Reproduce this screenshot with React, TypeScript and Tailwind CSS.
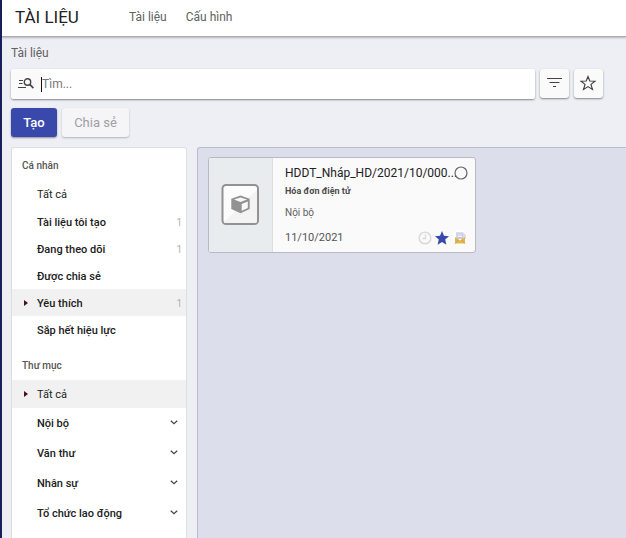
import React from "react";

type Item = { label: string; count?: number; active?: boolean; plain?: boolean };

const personal: Item[] = [
  { label: "Tài liệu tôi tạo", count: 1 },
  { label: "Đang theo dõi", count: 1 },
  { label: "Được chia sẻ" },
  { label: "Yêu thích", count: 1, active: true },
  { label: "Sắp hết hiệu lực" },
];

const folders = ["Nội bộ", "Văn thư", "Nhân sự", "Tổ chức lao động"];

function Caret() {
  return (
    <svg className="h-[6px] w-[4px]" viewBox="0 0 4 6" aria-hidden="true">
      <path d="M0 0L4 3L0 6Z" fill="#4a1020" />
    </svg>
  );
}

function PersonalRow({ label, count, active, plain }: Item) {
  return (
    <li>
      <button
        type="button"
        className={
          "flex w-full items-center pr-1 text-left text-[11px] text-[#212121] " +
          (plain ? "h-[29px] " : "h-[27px] font-medium ") +
          (active ? "bg-[#f1f1f1]" : "")
        }
      >
        <span className="flex w-[25px] shrink-0 pl-3">{active && <Caret />}</span>
        <span className="flex-1 pt-[3px]">{label}</span>
        {count !== undefined && (
          <span className="pt-px text-[10px] font-normal text-[#b0b0b0]">{count}</span>
        )}
      </button>
    </li>
  );
}

function FolderRow({ label }: { label: string }) {
  return (
    <li>
      <button
        type="button"
        className="flex h-[30px] w-full items-center pr-2 text-left text-[11px] font-medium text-[#212121]"
      >
        <span className="flex-1 pt-[3px] pl-[25px]">{label}</span>
        <svg className="h-[8px] w-[8px]" viewBox="0 0 8 8" fill="none" stroke="#444" aria-hidden="true">
          <path d="M0.8 1.7L4 4.7L7.2 1.7" strokeWidth="1.2" />
        </svg>
      </button>
    </li>
  );
}

function Sidebar() {
  return (
    <nav className="w-[176px] shrink-0 rounded-t-[3px] border border-b-0 border-[#dedee2] bg-white">
      <h2 className="pt-[11px] pl-[10px] text-[10px] leading-[14px] font-medium text-[#555]">Cá nhân</h2>
      <ul className="pt-[6px]">
        <PersonalRow label="Tất cả" plain />
        {personal.map((item) => (
          <PersonalRow key={item.label} {...item} />
        ))}
      </ul>
      <h2 className="pt-4 pl-[10px] text-[10px] leading-[14px] font-medium text-[#555]">Thư mục</h2>
      <ul className="pt-[7px]">
        <li>
          <button
            type="button"
            className="flex h-[28px] w-full items-center bg-[#f1f1f1] text-left text-[11px] text-[#212121]"
          >
            <span className="flex w-[25px] shrink-0 pl-3">
              <Caret />
            </span>
            <span className="pt-[2px]">Tất cả</span>
          </button>
        </li>
        {folders.map((label) => (
          <FolderRow key={label} label={label} />
        ))}
      </ul>
    </nav>
  );
}

function DocumentCard() {
  return (
    <article className="flex h-[96px] w-[268px] rounded-[3px] border border-[#b9b9c1] bg-[#fafafa]">
      <div className="flex w-[64px] shrink-0 items-center justify-center rounded-l-[2px] border-r border-[#dcdfe2] bg-[#e8ecef] pr-[2px]">
        <svg className="h-[42px] w-[38px]" viewBox="0 0 38 42" aria-hidden="true">
          <rect x="1.5" y="1" width="35.5" height="39" rx="3.5" fill="#fcfcfc" stroke="#929292" strokeWidth="2" />
          <path d="M3 38L36 5.500V37a2 2 0 0 1-2 2H5a2 2 0 0 1-2-1Z" fill="#f3f3f3" />
          <path d="M19.500 11.500L28.700 14.800V25.100L19.500 29.200L10.300 25.100V14.800Z" fill="#929292" />
          <path d="M19.500 13.500L26 15.600L19.500 18L13 15.600Z" fill="#f8f8f8" />
          <path d="M20.700 20L26.800 17.600V24L20.700 26.800Z" fill="#f8f8f8" />
        </svg>
      </div>
      <div className="min-w-0 flex-1 pt-[6px] pl-3">
        <div className="flex items-center">
          <h3 className="w-[172px] shrink-0 whitespace-nowrap text-[12px] leading-[18px] text-[#212121]">
            HDDT_Nháp_HD/2021/10/000...
          </h3>
          <button type="button" aria-label="Chọn tài liệu" className="-ml-[3px] shrink-0">
            <svg className="h-[14px] w-[14px]" viewBox="0 0 14 14" fill="none" aria-hidden="true">
              <circle cx="7" cy="7" r="6" stroke="#666" strokeWidth="1.2" />
            </svg>
          </button>
        </div>
        <p className="text-[9px] leading-[18px] font-bold text-[#4c4c4c]">Hóa đơn điện tử</p>
        <p className="pt-1 text-[10px] leading-[18px] text-[#616161]">Nội bộ</p>
        <div className="flex h-[18px] items-center pt-[6px] pr-2">
          <time dateTime="2021-10-11" className="flex-1 pt-2 text-[11px] leading-[18px] text-[#555]">
            11/10/2021
          </time>
          <div className="flex items-center gap-[3px] pt-[7px]">
            <svg className="h-[14px] w-[14px]" viewBox="0 0 14 14" fill="none" stroke="#dadada" aria-hidden="true">
              <circle cx="7" cy="7" r="5.8" strokeWidth="1.6" />
              <path d="M7.5 3.5V7.5H4.5" strokeWidth="1.5" />
            </svg>
            <button type="button" aria-label="Bỏ yêu thích">
              <svg className="block h-[14px] w-[14px]" viewBox="0 0 14 14" fill="#3949ab" aria-hidden="true">
                <path d="M7 0L9 4.8L14 5.2L10.2 8.6L11.4 13.8L7 11L2.6 13.8L3.8 8.6L0 5.2L5 4.8Z" />
              </svg>
            </button>
            <svg className="h-[15px] w-[15px]" viewBox="0 0 15 15" aria-hidden="true">
              <circle cx="7.5" cy="7.5" r="7.5" fill="#fff" />
              <path d="M4 2H11L14 5V9H4Z" fill="#dcdcf5" />
              <path d="M4.5 3.5H11V9H4.5Z" fill="#c9c9dd" />
              <path d="M5.5 5H10M5.5 6.5H10" stroke="#fff" strokeWidth=".7" />
              <path d="M3 7L8 10.5L13 7V13.5H3Z" fill="#e2b650" />
              <path d="M3 13.5L6.5 9.7M13 13.5L9.5 9.7" stroke="#c39336" strokeWidth=".7" />
            </svg>
          </div>
        </div>
      </div>
    </article>
  );
}

export default function App() {
  return (
    <div className="flex min-h-screen flex-col border-l-2 border-[#1a1e5c] bg-[#eeeff5] font-['Roboto','Noto_Sans',sans-serif]">
      <header className="flex h-[37px] shrink-0 items-center border-b border-[#a9a9ae] bg-white pb-[2px] pl-[13px] shadow-[0_1px_2px_rgba(0,0,0,0.25)]">
        <h1 className="w-[114px] text-[17px] leading-5 text-[#212121]">TÀI LIỆU</h1>
        <nav className="flex gap-[19px] text-[12px] leading-4 text-[#616161]">
          <a href="#tai-lieu">Tài liệu</a>
          <a href="#cau-hinh">Cấu hình</a>
        </nav>
      </header>

      <main className="flex flex-1 flex-col pl-[9px]">
        <p className="pt-2 text-[12px] leading-4 text-[#616161]">Tài liệu</p>

        <div className="flex items-start gap-[5px] pt-2 pr-[23px]">
          <div className="flex h-[30px] flex-1 items-center overflow-hidden rounded-[3px] bg-white shadow-[0_1px_2px_rgba(0,0,0,0.45)]">
            <label htmlFor="search" className="flex h-full w-[30px] shrink-0 items-center bg-[#fafafa] pl-[7px]">
              <svg
                className="h-[12px] w-[16px]"
                viewBox="0 0 16 12"
                fill="none"
                stroke="#444"
                role="img"
                aria-label="Tìm"
              >
                <path d="M1 2.5H5M1 5.5H4.5M0 9.5H8" strokeWidth="1.2" />
                <circle cx="9.5" cy="4" r="3.2" strokeWidth="1.4" />
                <path d="M11.8 6.4L15.4 10.1" strokeWidth="1.6" />
              </svg>
            </label>
            <span className="h-[15px] w-px shrink-0 bg-[#111]" />
            <input
              id="search"
              type="text"
              placeholder="Tìm..."
              className="h-full min-w-0 flex-1 bg-white text-[12px] text-[#333] outline-none placeholder:text-[#777]"
            />
          </div>
          <button
            type="button"
            aria-label="Bộ lọc"
            className="flex h-[29px] w-[29px] items-center justify-center rounded-[3px] bg-[#fafafa] pb-[2px] shadow-[0_1px_2px_rgba(0,0,0,0.45)]"
          >
            <svg className="h-[9px] w-[15px]" viewBox="0 0 15 9" stroke="#444" strokeWidth="1" aria-hidden="true">
              <path d="M0 0.5H15M2.5 4.5H12.5M6 8.5H9" />
            </svg>
          </button>
          <button
            type="button"
            aria-label="Yêu thích"
            className="flex h-[29px] w-[29px] items-center justify-center rounded-[3px] bg-[#fafafa] pr-[2px] pb-[2px] shadow-[0_1px_2px_rgba(0,0,0,0.45)]"
          >
            <svg className="h-[16px] w-[16px]" viewBox="0 0 16 16" fill="none" stroke="#444" strokeWidth="1.2" aria-hidden="true">
              <path d="M8 1.6L9.8 6L15 6.2L11 9.4L12.4 14.4L8 11.6L3.6 14.4L5 9.4L1 6.2L6.2 6Z" />
            </svg>
          </button>
        </div>

        <div className="flex gap-[5px] pt-[9px]">
          <button
            type="button"
            className="h-[29px] w-[46px] rounded-[3px] bg-[#3949ab] text-[13px] font-medium text-white shadow-[0_1px_2px_rgba(0,0,0,0.4)]"
          >
            Tạo
          </button>
          <button
            type="button"
            disabled
            className="h-[29px] w-[67px] rounded-[3px] bg-[#f5f5f8] text-[13px] text-[#a0a0a4] shadow-[0_1px_2px_rgba(0,0,0,0.25)]"
          >
            Chia sẻ
          </button>
        </div>

        <div className="flex flex-1 gap-[10px] pt-[10px]">
          <Sidebar />
          <section className="min-w-0 flex-1 rounded-tl-[3px] border-t border-l border-[#b9bccd] bg-[#dcdeeb] pt-[9px] pl-[10px]">
            <DocumentCard />
          </section>
        </div>
      </main>
    </div>
  );
}
